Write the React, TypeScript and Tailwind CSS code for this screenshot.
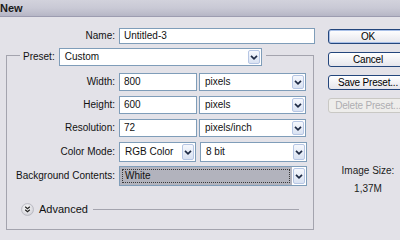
import type { ReactNode } from "react";

const Chevron = () => (
  <svg width="8" height="5" viewBox="0 0 8 5">
    <path d="M1 0.8 L4 3.8 L7 0.8" fill="none" stroke="#1f2b45" strokeWidth="1.7" />
  </svg>
);

function Dropdown({ value, className, filled }: { value: string; className: string; filled?: boolean }) {
  return (
    <div className={`flex border border-[#7f9db9] ${filled ? "bg-[#b2b3bd]" : "bg-white"} ${className}`}>
      <div className="flex min-w-0 flex-1 items-center p-[2px]">
        {filled ? (
          <span className="flex h-full flex-1 items-center border border-dotted border-[#3a3a3a] pl-[2px]">{value}</span>
        ) : (
          <span className="pl-[3px]">{value}</span>
        )}
      </div>
      <div className="flex w-[14px] items-center justify-center bg-white p-px">
        <div className="flex h-full w-full items-center justify-center rounded-[2px] border border-[#b6c6e4] bg-gradient-to-b from-[#f6f8fd] to-[#d9e2f2]">
          <Chevron />
        </div>
      </div>
    </div>
  );
}

function Field({ value, className }: { value: string; className: string }) {
  return (
    <div className={`flex items-center border border-[#7f9db9] bg-white pl-[4px] ${className}`}>{value}</div>
  );
}

function Row({ label, children, className }: { label: string; children: ReactNode; className: string }) {
  return (
    <div className={`flex items-stretch ${className}`}>
      <div className="flex w-[108px] items-center justify-end">{label}</div>
      <div className="ml-[4px] flex">{children}</div>
    </div>
  );
}

function Button({ label, disabled, primary }: { label: string; disabled?: boolean; primary?: boolean }) {
  return (
    <div
      className={`flex h-[15px] w-[80px] items-center justify-center whitespace-nowrap rounded-[3px] border tracking-[-0.2px] ${
        disabled
          ? "border-[#c9c8c4] bg-[#eeedeb] text-[#aeadb2]"
          : "border-[#24467c] bg-gradient-to-b from-[#ffffff] to-[#e6e6ec] text-black"
      } ${primary ? "shadow-[inset_0_0_0_1px_#a9c0e8]" : ""}`}
    >
      {label}
    </div>
  );
}

export default function App() {
  return (
    <div className="h-[240px] w-[400px] overflow-hidden bg-[#e3e2e8] font-['Liberation_Sans',Arial,sans-serif] text-[10px] leading-[12px] text-[#111]">
      <div className="flex h-[17px] items-center border-b border-[#9c9cb0] bg-gradient-to-b from-[#d2d2dc] via-[#c9c9d5] to-[#b6b6c6] text-[11px] font-bold text-[#1a1a1a]">
        New
      </div>

      <div className="flex">
        <div className="w-[315px]">
          <div className="mt-[11px] flex h-[16px]">
            <div className="flex w-[115px] items-center justify-end">Name:</div>
            <Field value="Untitled-3" className="ml-[4px] w-[196px]" />
          </div>

          <fieldset className="ml-[6px] w-[308px] border border-[#a4a4ae]">
            <legend className="ml-[13px] flex items-stretch px-[2px] pt-[4px]">
              <div className="flex h-[18px] items-center pr-[4px] pl-[1px]">Preset:</div>
              <Dropdown value="Custom" className="h-[18px] w-[203px]" />
              <div className="w-[2px]" />
            </legend>

            <div className="mt-[7px] flex flex-col">
              <Row label="Width:" className="h-[18px]">
                <Field value="800" className="w-[78px]" />
                <Dropdown value="pixels" className="ml-[2px] w-[107px]" />
              </Row>
              <Row label="Height:" className="mt-[5px] h-[18px]">
                <Field value="600" className="w-[78px]" />
                <Dropdown value="pixels" className="ml-[2px] w-[107px]" />
              </Row>
              <Row label="Resolution:" className="mt-[5px] h-[18px]">
                <Field value="72" className="w-[78px]" />
                <Dropdown value="pixels/inch" className="ml-[2px] w-[107px]" />
              </Row>
              <Row label="Color Mode:" className="mt-[5px] h-[20px]">
                <Dropdown value="RGB Color" className="w-[77px]" />
                <Dropdown value="8 bit" className="ml-[4px] w-[107px]" />
              </Row>
              <Row label="Background Contents:" className="mt-[4px] h-[20px]">
                <Dropdown value="White" filled className="w-[188px]" />
              </Row>
            </div>

            <div className="mt-[16px] mb-[13px] flex h-[14px] items-center">
              <svg className="ml-[14px]" width="13" height="13" viewBox="0 0 13 13">
                <defs>
                  <radialGradient id="adv" cx="45%" cy="40%" r="60%">
                    <stop offset="0%" stopColor="#ffffff" />
                    <stop offset="100%" stopColor="#cfcfd6" />
                  </radialGradient>
                </defs>
                <circle cx="6.5" cy="6.5" r="6" fill="url(#adv)" stroke="#b4b4bc" strokeWidth="0.8" />
                <path d="M4.2 3.8 L6.5 5.8 L8.8 3.8 M4.2 6.8 L6.5 8.8 L8.8 6.8" fill="none" stroke="#222" strokeWidth="1.2" />
              </svg>
              <span className="ml-[5px] text-[11px]">Advanced</span>
              <div className="mr-[14px] ml-[5px] h-px flex-1 bg-[#a4a4ae]" />
            </div>
          </fieldset>
        </div>

        <div className="ml-[13px] mt-[12px] flex w-[80px] shrink-0 flex-col items-center">
          <Button label="OK" primary />
          <div className="mt-[8px]">
            <Button label="Cancel" />
          </div>
          <div className="mt-[8px]">
            <Button label="Save Preset..." />
          </div>
          <div className="mt-[8px]">
            <Button label="Delete Preset..." disabled />
          </div>
          <div className="mt-[52px] text-[#222]">Image Size:</div>
          <div className="mt-[6px] text-[#222]">1,37M</div>
        </div>
      </div>
    </div>
  );
}
